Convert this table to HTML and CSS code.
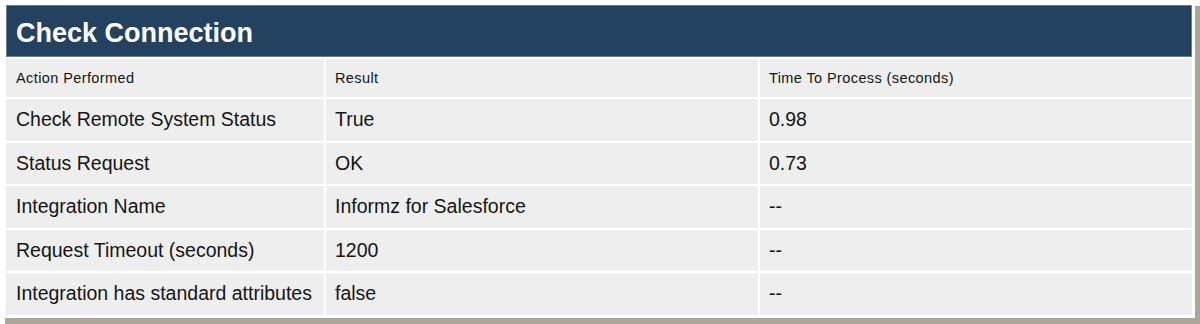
FILE: index.html
```html
<!DOCTYPE html>
<html>
<head>
<meta charset="utf-8">
<link rel="stylesheet" href="styles.css">
</head>
<body>
<div class="panel">
  <h2 class="title">Check Connection</h2>
  <table class="grid">
    <colgroup>
      <col class="c1"><col class="c2"><col class="c3">
    </colgroup>
    <thead>
      <tr class="head">
        <th>Action Performed</th>
        <th>Result</th>
        <th>Time To Process (seconds)</th>
      </tr>
    </thead>
    <tbody>
      <tr><td>Check Remote System Status</td><td>True</td><td>0.98</td></tr>
      <tr><td>Status Request</td><td>OK</td><td>0.73</td></tr>
      <tr><td>Integration Name</td><td>Informz for Salesforce</td><td>--</td></tr>
      <tr><td>Request Timeout (seconds)</td><td>1200</td><td>--</td></tr>
      <tr><td>Integration has standard attributes</td><td>false</td><td>--</td></tr>
    </tbody>
  </table>
</div>
</body>
</html>
```
FILE: styles.css
```css
html, body {
  margin: 0;
  padding: 0;
  background: #ffffff;
}
body {
  min-height: 324px;
  font-family: "Liberation Sans", Arial, sans-serif;
  color: #151515;
}
.panel {
  width: 1195px;
  height: 318px;
  overflow: hidden;
  box-sizing: border-box;
  padding: 5px 3px 0 6px;
  background: #ffffff;
  box-shadow: 5px 6px 0 #aba697;
}
.title {
  margin: 0;
  height: 52px;
  box-sizing: border-box;
  border: 1px solid #687e98;
  background: #23425f;
  color: #ffffff;
  font-size: 27px;
  font-weight: bold;
  line-height: 50px;
  padding: 2px 0 0 9px;
}
.grid {
  width: calc(100% + 4px);
  margin: 0 -2px;
  border-collapse: separate;
  border-spacing: 2px;
  table-layout: fixed;
}
.c1 { width: 318px; }
.c2 { width: 432px; }
.c3 { width: 432px; }
.grid th, .grid td {
  background: #eeeeee;
  text-align: left;
  padding: 0 0 0 10px;
  white-space: nowrap;
}
.head th {
  height: 38px;
  font-weight: normal;
  font-size: 14.5px;
  letter-spacing: 0.4px;
}
.grid td {
  height: 41.5px;
  font-size: 19.5px;
}
.grid td:not(:first-child), .grid th:not(:first-child) {
  padding-left: 9px;
}
```
